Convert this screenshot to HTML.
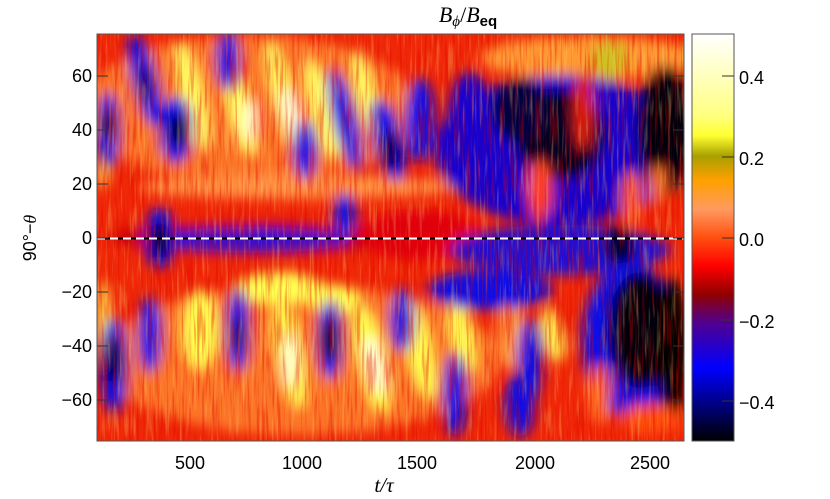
<!DOCTYPE html>
<html><head><meta charset="utf-8"><style>
html,body{margin:0;padding:0;background:#fff;}
svg{display:block;font-family:"Liberation Sans",sans-serif;}
</style></head><body>
<svg width="830" height="499" viewBox="0 0 830 499" xmlns="http://www.w3.org/2000/svg">
<defs>
<clipPath id="cp"><rect x="97" y="34" width="587" height="407"/></clipPath>
<filter id="bl" x="-10%" y="-10%" width="120%" height="120%"><feGaussianBlur stdDeviation="6"/></filter>
<filter id="nz" x="0" y="0" width="100%" height="100%">
<feTurbulence type="fractalNoise" baseFrequency="0.4 0.02" numOctaves="2" seed="3"/>
<feColorMatrix type="matrix" values="0 0 0 0 0.75  0 0 0 0 0  0 0 0 0 0  0 0 0 4 -1.9"/>
</filter>
<filter id="nz2" x="0" y="0" width="100%" height="100%">
<feTurbulence type="fractalNoise" baseFrequency="0.35 0.025" numOctaves="2" seed="9"/>
<feColorMatrix type="matrix" values="0 0 0 0 1  0 0 0 0 0.7  0 0 0 0 0.2  0 0 0 4 -2.1"/>
</filter>
<linearGradient id="cb" x1="0" y1="0" x2="0" y2="1">
<stop offset="0" stop-color="#ffffff"/>
<stop offset="0.2" stop-color="#ffff80"/>
<stop offset="0.25" stop-color="#ffff30"/>
<stop offset="0.3" stop-color="#a8a000"/>
<stop offset="0.36" stop-color="#ffa000"/>
<stop offset="0.43" stop-color="#ff9a60"/>
<stop offset="0.5" stop-color="#ff5010"/>
<stop offset="0.57" stop-color="#ff0000"/>
<stop offset="0.64" stop-color="#900000"/>
<stop offset="0.71" stop-color="#500090"/>
<stop offset="0.82" stop-color="#0000ff"/>
<stop offset="0.9" stop-color="#000090"/>
<stop offset="1" stop-color="#000000"/>
</linearGradient>
</defs>
<g clip-path="url(#cp)">
<rect x="97" y="34" width="587" height="407" fill="#f02808"/>
<g filter="url(#bl)">
<ellipse cx="250" cy="110" rx="170" ry="75" fill="#ff8a30" opacity="0.8"/>
<ellipse cx="300" cy="360" rx="200" ry="75" fill="#ff8a30" opacity="0.8"/>
<ellipse cx="300" cy="187" rx="160" ry="12" fill="#ff9040"/>
<ellipse cx="590" cy="58" rx="110" ry="22" fill="#ff9a30"/>
<ellipse cx="560" cy="150" rx="125" ry="75" fill="#1800d0"/>
<ellipse cx="560" cy="135" rx="45" ry="45" fill="#000020"/>
<ellipse cx="665" cy="130" rx="28" ry="65" fill="#000010"/>
<ellipse cx="520" cy="110" rx="28" ry="32" fill="#000040"/>
<ellipse cx="540" cy="190" rx="12" ry="30" fill="#ff4010"/>
<ellipse cx="583" cy="110" rx="9" ry="40" fill="#e02010"/>
<ellipse cx="632" cy="200" rx="10" ry="28" fill="#ff6020"/>
<ellipse cx="658" cy="185" rx="8" ry="20" fill="#ff7020"/>
<ellipse cx="470" cy="120" rx="22" ry="48" fill="#1800d0"/>
<ellipse cx="610" cy="60" rx="18" ry="20" fill="#d0c020"/>
<g fill="#ffff60">
<ellipse cx="104" cy="150" rx="6" ry="40"/>
<ellipse cx="192" cy="95" rx="12" ry="55" transform="rotate(-14 192 95)"/>
<ellipse cx="240" cy="110" rx="12" ry="48" transform="rotate(-14 240 110)"/>
<ellipse cx="283" cy="95" rx="11" ry="55" transform="rotate(-14 283 95)"/>
<ellipse cx="322" cy="110" rx="12" ry="52" transform="rotate(-14 322 110)"/>
<ellipse cx="366" cy="95" rx="10" ry="45" transform="rotate(-14 366 95)"/>
</g>
<ellipse cx="292" cy="115" rx="8" ry="28" fill="#ffffe0" transform="rotate(-14 292 115)"/>
<ellipse cx="250" cy="120" rx="7" ry="22" fill="#ffffd0"/>
<g fill="#0808e8">
<ellipse cx="108" cy="130" rx="12" ry="38"/>
<ellipse cx="145" cy="80" rx="13" ry="48" transform="rotate(-14 145 80)"/>
<ellipse cx="176" cy="130" rx="17" ry="34"/>
<ellipse cx="228" cy="60" rx="12" ry="30"/>
<ellipse cx="305" cy="150" rx="12" ry="30"/>
<ellipse cx="345" cy="120" rx="12" ry="52" transform="rotate(-14 345 120)"/>
<ellipse cx="388" cy="140" rx="15" ry="42" transform="rotate(-14 388 140)"/>
<ellipse cx="420" cy="120" rx="15" ry="42"/>
</g>
<ellipse cx="108" cy="125" rx="7" ry="15" fill="#000"/>
<ellipse cx="178" cy="130" rx="9" ry="17" fill="#000"/>
<ellipse cx="390" cy="150" rx="8" ry="20" fill="#000040"/>
<ellipse cx="145" cy="85" rx="6" ry="20" fill="#000060"/>
<ellipse cx="260" cy="238" rx="150" ry="16" fill="#c00010"/>
<ellipse cx="250" cy="240" rx="100" ry="13" fill="#3010d0"/>
<ellipse cx="160" cy="238" rx="16" ry="30" fill="#0808e8"/>
<ellipse cx="160" cy="240" rx="9" ry="18" fill="#000"/>
<ellipse cx="420" cy="235" rx="60" ry="25" fill="#e00010"/>
<ellipse cx="560" cy="250" rx="110" ry="25" fill="#2010d0"/>
<ellipse cx="620" cy="245" rx="15" ry="20" fill="#000030"/>
<ellipse cx="345" cy="215" rx="12" ry="22" fill="#1818e0"/>
<g fill="#ffff50">
<ellipse cx="104" cy="330" rx="6" ry="50"/>
<ellipse cx="200" cy="330" rx="18" ry="40"/>
<ellipse cx="280" cy="288" rx="45" ry="16"/>
<ellipse cx="290" cy="355" rx="13" ry="55" transform="rotate(-10 290 355)"/>
<ellipse cx="335" cy="300" rx="25" ry="15"/>
<ellipse cx="372" cy="360" rx="15" ry="55" transform="rotate(-12 372 360)"/>
<ellipse cx="420" cy="350" rx="13" ry="50" transform="rotate(-12 420 350)"/>
<ellipse cx="462" cy="335" rx="12" ry="38" transform="rotate(-12 462 335)"/>
<ellipse cx="553" cy="335" rx="10" ry="28" transform="rotate(-12 553 335)"/>
</g>
<ellipse cx="375" cy="365" rx="8" ry="30" fill="#ffffe0" transform="rotate(-12 375 365)"/>
<ellipse cx="290" cy="360" rx="6" ry="28" fill="#ffffe0"/>
<ellipse cx="510" cy="330" rx="12" ry="40" fill="#ffa040"/>
<ellipse cx="600" cy="390" rx="12" ry="35" fill="#ffa040"/>
<g fill="#0808e8">
<ellipse cx="114" cy="365" rx="14" ry="48"/>
<ellipse cx="150" cy="335" rx="12" ry="38"/>
<ellipse cx="238" cy="330" rx="12" ry="42"/>
<ellipse cx="330" cy="340" rx="13" ry="40"/>
<ellipse cx="402" cy="320" rx="12" ry="32"/>
<ellipse cx="455" cy="395" rx="12" ry="42"/>
<ellipse cx="520" cy="405" rx="15" ry="32"/>
<ellipse cx="490" cy="290" rx="62" ry="20"/>
<ellipse cx="530" cy="360" rx="13" ry="42"/>
<ellipse cx="630" cy="340" rx="48" ry="78"/>
</g>
<ellipse cx="114" cy="360" rx="8" ry="25" fill="#000"/>
<ellipse cx="330" cy="340" rx="8" ry="22" fill="#000"/>
<ellipse cx="238" cy="335" rx="6" ry="18" fill="#000060"/>
<ellipse cx="640" cy="330" rx="32" ry="58" fill="#000010"/>
<ellipse cx="672" cy="350" rx="16" ry="72" fill="#000"/>
<ellipse cx="600" cy="395" rx="10" ry="30" fill="#ff7020"/>
<ellipse cx="650" cy="420" rx="30" ry="16" fill="#ff5010"/>
</g>
<rect x="97" y="34" width="587" height="407" filter="url(#nz)" opacity="0.38"/>
<rect x="97" y="34" width="587" height="407" filter="url(#nz2)" opacity="0.28"/>
<line x1="97" y1="238.5" x2="684" y2="238.5" stroke="#000" stroke-width="2"/>
<line x1="97" y1="238.5" x2="684" y2="238.5" stroke="#fff" stroke-width="2" stroke-dasharray="8 5"/>
</g>
<rect x="97" y="34" width="587" height="407" fill="none" stroke="#555" stroke-width="1"/>
<g stroke="#333" stroke-width="1">
<line x1="97" y1="76" x2="108" y2="76"/><line x1="97" y1="130" x2="108" y2="130"/>
<line x1="97" y1="184" x2="108" y2="184"/><line x1="97" y1="238" x2="108" y2="238"/>
<line x1="97" y1="292" x2="108" y2="292"/><line x1="97" y1="346" x2="108" y2="346"/>
<line x1="97" y1="400" x2="108" y2="400"/>
<line x1="684" y1="76" x2="673" y2="76"/><line x1="684" y1="130" x2="673" y2="130"/>
<line x1="684" y1="184" x2="673" y2="184"/><line x1="684" y1="238" x2="673" y2="238"/>
<line x1="684" y1="292" x2="673" y2="292"/><line x1="684" y1="346" x2="673" y2="346"/>
<line x1="684" y1="400" x2="673" y2="400"/>
</g>
<g font-size="18" fill="#000" text-anchor="end">
<text x="92" y="82">60</text><text x="92" y="136">40</text><text x="92" y="190">20</text>
<text x="92" y="244">0</text><text x="92" y="298">−20</text><text x="92" y="352">−40</text>
<text x="92" y="406">−60</text>
</g>
<g font-size="18" fill="#000" text-anchor="middle">
<text x="190" y="469">500</text><text x="302" y="469">1000</text><text x="417" y="469">1500</text>
<text x="535" y="469">2000</text><text x="650" y="469">2500</text>
</g>
<text x="384" y="492" font-family="Liberation Serif,serif" font-style="italic" font-size="21" text-anchor="middle">t/τ</text>
<text transform="translate(36 238) rotate(-90)" font-size="18" text-anchor="middle">90°−<tspan font-family="Liberation Serif,serif" font-style="italic">θ</tspan></text>
<text x="468" y="22" font-family="Liberation Serif,serif" font-size="22" text-anchor="middle"><tspan font-style="italic">B</tspan><tspan font-size="15" dy="4" font-style="italic">ϕ</tspan><tspan dy="-4">/</tspan><tspan font-style="italic">B</tspan><tspan font-size="15" dy="4" font-family="Liberation Sans,sans-serif" font-weight="bold">eq</tspan></text>
<rect x="692" y="34" width="42" height="407" fill="url(#cb)" stroke="#555" stroke-width="1"/>
<g stroke="#333"><line x1="722" y1="76" x2="734" y2="76"/><line x1="722" y1="157" x2="734" y2="157"/>
<line x1="722" y1="238" x2="734" y2="238"/><line x1="722" y1="320" x2="734" y2="320"/><line x1="722" y1="401" x2="734" y2="401"/></g>
<g font-size="18" fill="#000">
<text x="739" y="84">0.4</text><text x="739" y="165">0.2</text><text x="739" y="246">0.0</text>
<text x="739" y="328">−0.2</text><text x="739" y="409">−0.4</text>
</g>
</svg>
</body></html>
